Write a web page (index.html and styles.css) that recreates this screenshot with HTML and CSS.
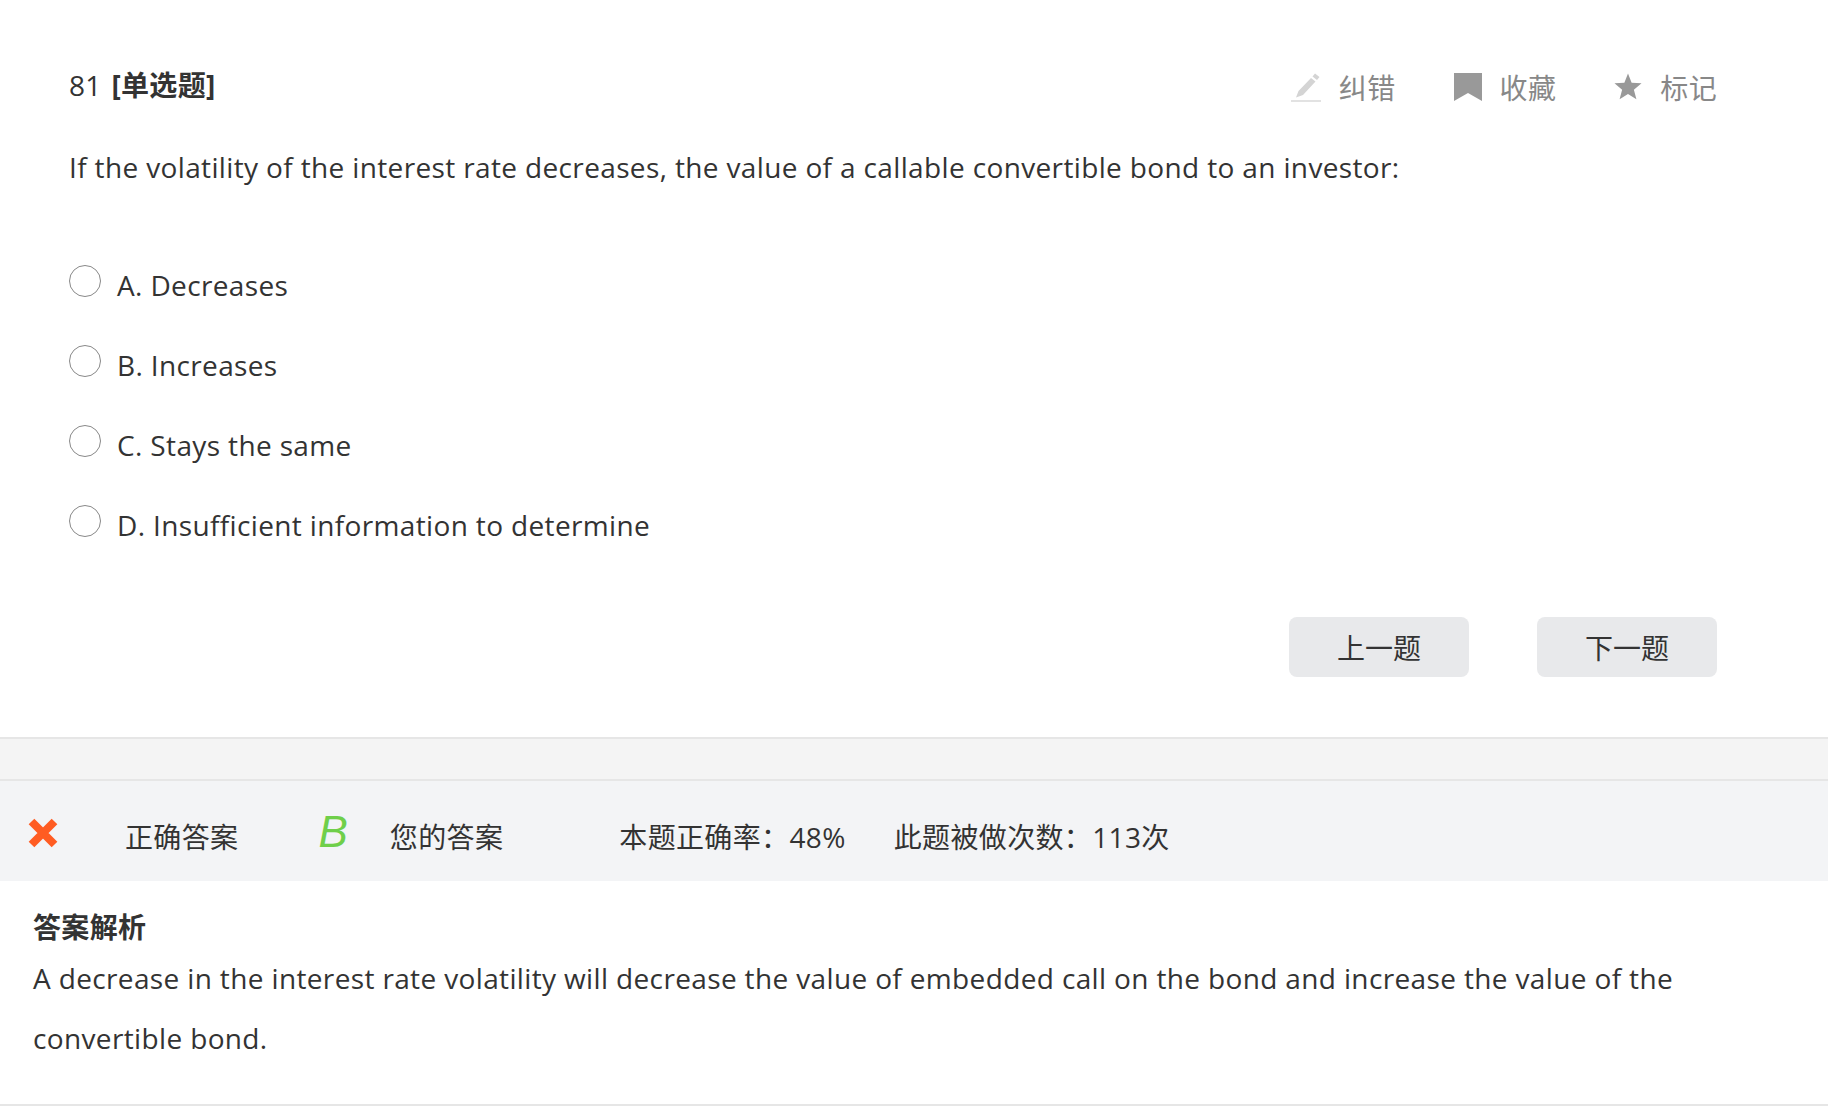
FILE: index.html
```html
<!DOCTYPE html>
<html lang="zh">
<head>
    <meta charset="UTF-8">
    <title>81 单选题</title>
    <link rel="stylesheet" href="styles.css">
</head>
<body>
    <section class="question">
        <div class="question-head">
            <div class="question-title">81 <b>[单选题]</b></div>
            <div class="tools">
                <span class="tool">
                    <svg width="30" height="30" viewBox="0 0 30 30"><path d="M24 1.500l4.500 3.500-2.500 3-4.500-3.500zM20 6l4.500 3.500L12 23l-7 2.500L7.500 19z" fill="#d4d4d4"/><rect x="0" y="28" width="30" height="2" fill="#e2e2e2"/></svg>
                    纠错
                </span>
                <span class="tool">
                    <svg width="28" height="28" viewBox="0 0 28 28"><path d="M0 0h28v28L14 20 0 28z" fill="#999"/></svg>
                    收藏
                </span>
                <span class="tool">
                    <svg width="28" height="28" viewBox="0 0 30 30"><path d="M15 .500l3.900 10 10.600.6-8.200 6.800 2.700 10.300L15 22.500l-9 5.700 2.700-10.300L.500 11.100l10.600-.6z" fill="#999"/></svg>
                    标记
                </span>
            </div>
        </div>
        <p class="stem">If the volatility of the interest rate decreases, the value of a callable convertible bond to an investor:</p>
        <ul class="options">
            <li><i class="radio"></i><span>A. Decreases</span></li>
            <li><i class="radio"></i><span>B. Increases</span></li>
            <li><i class="radio"></i><span>C. Stays the same</span></li>
            <li><i class="radio"></i><span>D. Insufficient information to determine</span></li>
        </ul>
        <div class="pager">
            <button class="btn">上一题</button>
            <button class="btn">下一题</button>
        </div>
    </section>

    <div class="gap"></div>

    <div class="result">
        <svg class="wrong" width="30" height="30" viewBox="0 0 30 30"><path d="M3.500 3.500l23 23M26.500 3.500l-23 23" stroke="#ff5c22" stroke-width="8" fill="none"/></svg>
        <span class="correct-label">正确答案</span>
        <em class="answer">B</em>
        <span class="your-label">您的答案</span>
        <span class="rate">本题正确率：48%</span>
        <span class="count">此题被做次数：113次</span>
    </div>

    <section class="analysis">
        <h3>答案解析</h3>
        <p>A decrease in the interest rate volatility will decrease the value of embedded call on the bond and increase the value of the convertible bond.</p>
    </section>
</body>
</html>
```

FILE: styles.css
```css
* {
    box-sizing: border-box;
}

body {
    margin: 0;
    background-color: #fff;
    color: #333;
    font-family: "Open Sans", "Noto Sans CJK SC", sans-serif;
    font-size: 28px;
    letter-spacing: .36px;
}

.question {
    height: 739px;
    padding: 59px 111px 0 69px;
    border-bottom: 2px solid #e6e6e6;
}

.question-head {
    display: flex;
    justify-content: space-between;
    align-items: center;
    height: 50px;
}

.question-title {
    word-spacing: 2px;
}

.question-title b {
    font-weight: 700;
}

.tools {
    display: flex;
    gap: 58px;
    margin-top: 6px;
    color: #888;
}

.tool {
    display: flex;
    align-items: center;
    gap: 18px;
}

.stem {
    margin: 33px 0 0;
    line-height: 50px;
}

.options {
    list-style: none;
    margin: 54px 0 0;
    padding: 0;
}

.options li {
    display: flex;
    align-items: center;
    gap: 16px;
    height: 80px;
}

.options span {
    margin-top: -2px;
}

.radio {
    width: 32px;
    height: 32px;
    margin-top: -10px;
    border: 1px solid #888;
    border-radius: 50%;
}

.pager {
    display: flex;
    justify-content: flex-end;
    gap: 68px;
    margin-top: 51px;
}

.btn {
    width: 180px;
    height: 60px;
    border: none;
    border-radius: 8px;
    background-color: #e8e9eb;
    color: #333;
    font-family: inherit;
    font-size: 28px;
}

.gap {
    height: 42px;
    background-color: #f4f4f4;
    border-bottom: 2px solid #e6e6e6;
}

.result {
    display: flex;
    align-items: center;
    height: 100px;
    padding: 10px 0 0 28px;
    background-color: #f3f4f6;
}

.wrong {
    margin-top: -6px;
}

.correct-label {
    margin-left: 67px;
}

.answer {
    margin: -8px 0 0 80px;
    color: #6fcf4a;
    font-family: "Liberation Sans", sans-serif;
    font-size: 44px;
    letter-spacing: 0;
}

.your-label {
    margin-left: 42px;
}

.rate {
    margin-left: 116px;
}

.count {
    margin-left: 48px;
}

.analysis {
    height: 225px;
    padding: 26px 33px 0;
    border-bottom: 2px solid #e6e6e6;
}

.analysis h3 {
    margin: 0;
    font-size: 28px;
    line-height: 41px;
}

.analysis p {
    margin: 0;
    line-height: 60px;
}
```
